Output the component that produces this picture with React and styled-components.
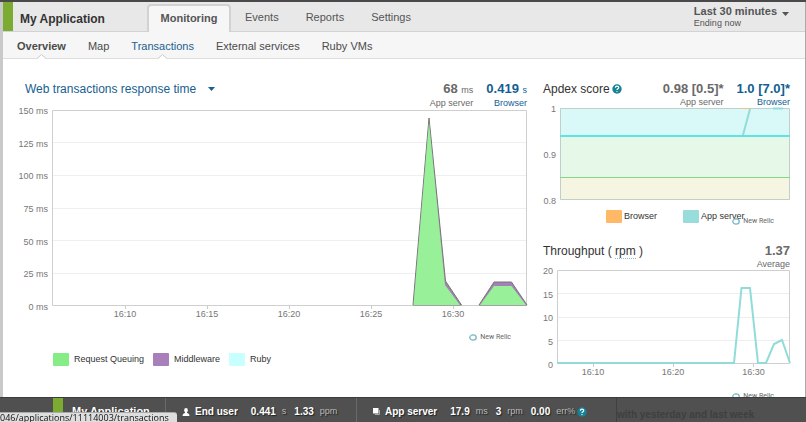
import React from "react";
import styled, { createGlobalStyle } from "styled-components";

const sans = `"Liberation Sans", Arial, Helvetica, sans-serif`;

const GlobalStyle = createGlobalStyle`
  *, *::before, *::after { box-sizing: border-box; }
  body { margin: 0; background: #fff; font-family: ${sans}; color: #555; }
  h1, h2, ul, dl, dd { margin: 0; padding: 0; }
  a { color: inherit; text-decoration: none; }
  button { border: 0; padding: 0; background: none; font-family: inherit; color: inherit; cursor: pointer; }
`;

const Page = styled.div`
  height: 100vh;
  overflow: hidden;
  display: flex;
  flex-direction: column;
  border-top: 2px solid #4b484b;
`;

const Frame = styled.div`
  flex: 1;
  min-height: 0;
  overflow: hidden;
  border-left: 3px solid #c9c9c9;
  border-right: 1px solid #a9a9a9;
`;

const Header = styled.header`
  display: flex;
  height: 30px;
  background: #e8e8e8;
  border-bottom: 1px solid #d2d2d2;
`;

const AppName = styled.h1`
  width: 144px;
  border-left: 10px solid #7bac31;
  padding: 7px 0 0 7px;
  font: bold 12px/20px ${sans};
  color: #333;
  white-space: nowrap;
`;

const Tabs = styled.nav`
  display: flex;
  flex: 1;
  gap: 27px;
  font-size: 11px;
  line-height: 26px;
  padding-top: 2px;
`;

const Tab = styled.a`
  ${(p) =>
    p.$active &&
    `
    margin-right: -13px;
    width: 84px;
    height: 28px;
    text-align: center;
    font-weight: bold;
    background: #f6f6f6;
    border: 2px solid #d2d2d2;
    border-bottom: 0;
    border-radius: 4px 4px 0 0;
    line-height: 24px;
  `}
`;

const TimePicker = styled.button`
  display: flex;
  align-items: flex-start;
  gap: 5px;
  margin: 3px 16px 0 0;
  text-align: left;
  font-size: 11px;
  line-height: 12px;
  svg { margin-top: 7px; }
`;

const TimeRange = styled.span`
  font-weight: bold;
`;

const TimeEnd = styled.span`
  display: block;
  font: 9px/12px ${sans};
`;

const SubNav = styled.nav`
  display: flex;
  gap: 22px;
  height: 27px;
  padding-left: 14px;
  background: #f6f6f6;
  border-bottom: 1px solid #dedede;
  font-size: 11px;
  line-height: 29px;
`;

const SubLink = styled.a`
  display: flex;
  flex-direction: column;
  align-items: center;
  height: 27px;
  font-weight: ${(p) => (p.$bold ? "bold" : "normal")};
  color: ${(p) => (p.$blue ? "#1d608f" : "#4b4b4b")};
  svg { margin-top: -7px; flex: none; }
`;

const Columns = styled.main`
  display: grid;
  grid-template-columns: minmax(0, 509fr) minmax(0, 247fr);
  gap: 16px;
  padding: 22px 15px 0;
`;

const Panel = styled.section`
  display: flex;
  flex-direction: column;
`;

const PanelHead = styled.div`
  display: flex;
  justify-content: space-between;
  align-items: flex-start;
  height: ${(p) => p.$h}px;
  padding-left: ${(p) => p.$inset || 0}px;
`;

const Title = styled.h2`
  display: flex;
  align-items: center;
  gap: 2px;
  font-weight: normal;
  font-size: 12px;
  line-height: 16px;
  color: #333;
  white-space: nowrap;
`;

const TitleButton = styled.button`
  display: flex;
  align-items: center;
  gap: 12px;
  font-size: 12px;
  line-height: 16px;
  color: #17608f;
`;

const Unit = styled.abbr`
  text-decoration: none;
  border-bottom: 1px dotted #7cc6cf;
`;

const Stats = styled.dl`
  display: flex;
  gap: 13px;
  text-align: right;
  white-space: nowrap;
`;

const Stat = styled.div`
  display: flex;
  flex-direction: column-reverse;
  color: ${(p) => (p.$blue ? "#135e92" : "#696969")};
  dt { font-size: 9px; line-height: 10px; }
  dd { font-size: 13px; line-height: 16px; font-weight: bold; }
  small { font-size: 9px; font-weight: normal; }
`;

const ChartGrid = styled.div`
  display: grid;
  grid-template-columns: ${(p) => p.$axis}px minmax(0, 1fr);
`;

const YAxis = styled.div`
  display: flex;
  flex-direction: column;
  justify-content: space-between;
  margin: -5px 0 -7px;
  padding-right: 4px;
  text-align: right;
  font-size: 9px;
  line-height: 12px;
  color: #777;
  white-space: nowrap;
`;

const Plot = styled.svg`
  display: block;
  width: 100%;
  height: ${(p) => p.$h}px;
  overflow: visible;
  * { vector-effect: non-scaling-stroke; }
`;

const XAxis = styled.div`
  grid-column: 2;
  display: grid;
  grid-template-columns: ${(p) => p.$cols};
  font-size: 9px;
  line-height: 11px;
  color: #777;
`;

const Tick = styled.span`
  display: flex;
  flex-direction: column;
  align-items: center;
  &::before { content: ""; height: 3px; border-left: 1px solid #ccc; }
`;

const Brand = styled.div`
  display: flex;
  align-items: center;
  align-self: flex-end;
  gap: 3px;
  height: 8px;
  margin: ${(p) => p.$top}px 16px 0 0;
  font: 7px/8px Roboto, sans-serif;
  color: #666;
`;

const Legend = styled.ul`
  display: flex;
  list-style: none;
  gap: ${(p) => p.$gap}px;
  margin-top: ${(p) => p.$top || 0}px;
  padding-left: ${(p) => p.$inset}px;
  font-size: 9px;
  line-height: 13px;
  color: #333;
`;

const LegendItem = styled.li`
  display: flex;
  gap: ${(p) => p.$gap}px;
  white-space: nowrap;
  &::before {
    content: "";
    width: 16px;
    height: 13px;
    border-radius: 1px;
    background: ${(p) => p.$color};
  }
`;

const RightColumn = styled.div`
  display: flex;
  flex-direction: column;
`;

const ApdexLegend = styled.div`
  display: flex;
  flex-direction: column;
  height: 43px;
  padding-top: 10px;
`;

const StatusBar = styled.footer`
  display: flex;
  flex: none;
  height: 25px;
  padding-left: 53px;
  background: #505050;
  border-top: 1px solid #3c3c3c;
  color: #fff;
  font-size: 10px;
  line-height: 27px;
  text-shadow: 1px 1px 1px #222;
  white-space: nowrap;
  overflow: hidden;
`;

const BarName = styled.strong`
  width: 113px;
  padding-left: 9px;
  border-left: 10px solid #7bac31;
  border-right: 1px solid #696969;
  font-size: 11px;
`;

const BarGroup = styled.div`
  display: flex;
  align-items: center;
  width: ${(p) => p.$w}px;
  height: 27px;
  padding-left: 16px;
  border-right: 1px solid ${(p) => (p.$last ? "#404040" : "#696969")};
`;

const BarLabel = styled.strong`
  display: flex;
  align-items: center;
  gap: 5px;
  margin-right: 13px;
`;

const Metric = styled.span`
  display: flex;
  gap: 6px;
  margin-right: 8px;
  font-weight: bold;
  &:last-of-type { margin-right: 2px; }
  small { font-size: 9px; font-weight: normal; color: #bbb; }
`;

const FadedNote = styled.span`
  padding-top: 7px;
  font-size: 10px;
  line-height: 20px;
  font-weight: bold;
  text-shadow: none;
  color: #3f3f3f;
`;

const LinkPreview = styled.div`
  position: fixed;
  left: 0;
  bottom: 0;
  height: 10px;
  padding-right: 8px;
  background: #dedede;
  border-top: 1px solid #aaa;
  border-radius: 0 3px 0 0;
  font: 9px/10px "Open Sans", "Noto Sans", sans-serif;
  color: #111;
`;

const Caret = ({ color = "#555" }) => (
  <svg width="7" height="4" viewBox="0 0 7 4" aria-hidden="true">
    <path d="M0 0h7L3.5 4z" fill={color} />
  </svg>
);

const Notch = () => (
  <svg width="9" height="5" viewBox="0 0 9 5" aria-hidden="true">
    <path d="M0 4.5L4.5 0.5L9 4.5V5H0z" fill="#fff" />
    <path d="M0 4.5L4.5 0.5L9 4.5" fill="none" stroke="#c8c8c8" />
  </svg>
);

const Help = () => (
  <svg width="10" height="10" viewBox="0 0 10 10" role="img" aria-label="Help">
    <circle cx="5" cy="5" r="4.7" fill="#168297" />
    <path d="M3.4 3.8C3.4 1.7 6.7 1.7 6.7 3.7C6.7 4.8 5 4.8 5 6" fill="none" stroke="#fff" strokeWidth="1.2" />
    <circle cx="5" cy="7.6" r="0.7" fill="#fff" />
  </svg>
);

const NewRelic = ({ top }) => (
  <Brand $top={top}>
    <svg width="8" height="7" viewBox="0 0 8 7" aria-hidden="true">
      <ellipse cx="4" cy="3.5" rx="3.2" ry="2.6" fill="#fff" stroke="#76b6c5" strokeWidth="1.3" />
      <path d="M1 2.6C2 1 5 0.6 6.4 2" fill="none" stroke="#9fced8" />
    </svg>
    New Relic
  </Brand>
);

const Person = () => (
  <svg width="8" height="8" viewBox="0 0 8 8" aria-hidden="true">
    <ellipse cx="4" cy="2.3" rx="1.8" ry="2.2" fill="#fff" />
    <path d="M0.5 8C0.5 5.8 2 5.3 3 5V4h2v1c1 .3 2.500 .8 2.500 3z" fill="#fff" />
  </svg>
);

const Server = () => (
  <svg width="7" height="7" viewBox="0 0 7 7" aria-hidden="true">
    <path d="M2 6.500H6.500V2" fill="none" stroke="#aaa" />
    <path d="M0 0h5.500v5.500H0z" fill="#fff" />
  </svg>
);

const Labels = ({ values }) => (
  <YAxis>
    {values.map((v) => (
      <span key={v}>{v}</span>
    ))}
  </YAxis>
);

const Times = ({ cols, lead, values }) => (
  <XAxis $cols={cols}>
    {lead && <span />}
    {values.map((v) => (
      <Tick key={v}>{v}</Tick>
    ))}
  </XAxis>
);

const ResponseTime = () => (
  <Panel>
    <PanelHead $h={29} $inset={7}>
      <Title>
        <TitleButton>
          Web transactions response time <Caret color="#17608f" />
        </TitleButton>
      </Title>
      <Stats>
        <Stat>
          <dt>App server</dt>
          <dd>68 <small>ms</small></dd>
        </Stat>
        <Stat $blue>
          <dt>Browser</dt>
          <dd>0.419 <small>s</small></dd>
        </Stat>
      </Stats>
    </PanelHead>
    <ChartGrid $axis={34}>
      <Labels values={["150 ms", "125 ms", "100 ms", "75 ms", "50 ms", "25 ms", "0 ms"]} />
      <Plot $h={196} viewBox="0 0 475 196" preserveAspectRatio="none">
        <path d="M0 32.500H475M0 65.500H475M0 98.500H475M0 130.500H475M0 163.500H475" stroke="#efefef" />
        <path d="M.5 195.500V.5H474.500V195.500z" fill="none" stroke="#cfcfcf" />
        <path d="M361 195L377 8L393.500 171L409.500 195zM427 195L442 172H459.500L475 195z" fill="#a67fb6" stroke="#777" />
        <path d="M361.500 195L377 12L393 175L408 195zM428 195L442 176H459.500L474 195z" fill="#98f098" />
      </Plot>
      <Times cols="32fr repeat(5, 82fr) 33fr" lead values={["16:10", "16:15", "16:20", "16:25", "16:30"]} />
    </ChartGrid>
    <NewRelic top={13} />
    <Legend $gap={9} $inset={35} $top={12}>
      <LegendItem $gap={5} $color="#86ed86">Request Queuing</LegendItem>
      <LegendItem $gap={5} $color="#a87fba">Middleware</LegendItem>
      <LegendItem $gap={5} $color="#c8ffff">Ruby</LegendItem>
    </Legend>
  </Panel>
);

const Apdex = () => (
  <Panel>
    <PanelHead $h={27}>
      <Title>Apdex score <Help /></Title>
      <Stats>
        <Stat>
          <dt>App server</dt>
          <dd>0.98 [0.5]*</dd>
        </Stat>
        <Stat $blue>
          <dt>Browser</dt>
          <dd>1.0 [7.0]*</dd>
        </Stat>
      </Stats>
    </PanelHead>
    <ChartGrid $axis={17}>
      <Labels values={["1", "0.9", "0.8"]} />
      <Plot $h={92} viewBox="0 0 230 92" preserveAspectRatio="none">
        <path d="M0 0H230V28H0z" fill="#d9f9f8" />
        <path d="M0 28H230V69H0z" fill="#e6f8e8" />
        <path d="M0 69H230V92H0z" fill="#f5f5e2" />
        <path d="M.5 .5H229.500V91.500H.5z" fill="none" stroke="#bfcfcb" />
        <path d="M0 69.500H230" stroke="#82d884" />
        <path d="M0 28H230" stroke="#60e3e3" strokeWidth="2" />
        <path d="M182 .5H190" stroke="#f5c07b" />
        <path d="M183 27L190 1M213 .5H223" fill="none" stroke="#91dcd9" strokeWidth="2" />
      </Plot>
    </ChartGrid>
    <ApdexLegend>
      <Legend $gap={26} $inset={63}>
        <LegendItem $gap={2} $color="#ffb866">Browser</LegendItem>
        <LegendItem $gap={2} $color="#98dddb">App server</LegendItem>
      </Legend>
      <NewRelic top={-6} />
    </ApdexLegend>
  </Panel>
);

const Throughput = () => (
  <Panel>
    <PanelHead $h={27}>
      <Title>
        <span>Throughput ( <Unit>rpm</Unit> )</span>
      </Title>
      <Stats>
        <Stat>
          <dt>Average</dt>
          <dd>1.37</dd>
        </Stat>
      </Stats>
    </PanelHead>
    <ChartGrid $axis={14}>
      <Labels values={["20", "15", "10", "5", "0"]} />
      <Plot $h={94} viewBox="0 0 233 94" preserveAspectRatio="none">
        <path d="M0 23.500H233M0 47.500H233M0 70.500H233" stroke="#eee" />
        <path d="M.5 93.500V.5H232.500V93.500z" fill="none" stroke="#cfcfcf" />
        <path
          d="M0 93H177L184.500 18H193L201 93H209L217 74L225 70L233 93"
          fill="none"
          stroke="#91dcd9"
          strokeWidth="2"
        />
      </Plot>
      <Times cols="72fr 88fr 73fr" values={["16:10", "16:20", "16:30"]} />
    </ChartGrid>
    <NewRelic top={14} />
  </Panel>
);

export default function App() {
  return (
    <Page>
      <GlobalStyle />
      <Frame>
        <Header>
          <AppName>My Application</AppName>
          <Tabs aria-label="Product">
            <Tab href="#monitoring" $active>Monitoring</Tab>
            <Tab href="#events">Events</Tab>
            <Tab href="#reports">Reports</Tab>
            <Tab href="#settings">Settings</Tab>
          </Tabs>
          <TimePicker>
            <span>
              <TimeRange>Last 30 minutes</TimeRange>
              <TimeEnd>Ending now</TimeEnd>
            </span>
            <Caret />
          </TimePicker>
        </Header>
        <SubNav aria-label="Monitoring">
          <SubLink href="#overview" $bold>Overview<Notch /></SubLink>
          <SubLink href="#map">Map</SubLink>
          <SubLink href="#transactions" $blue>Transactions<Notch /></SubLink>
          <SubLink href="#external">External services</SubLink>
          <SubLink href="#vms">Ruby VMs</SubLink>
        </SubNav>
        <Columns>
          <ResponseTime />
          <RightColumn>
            <Apdex />
            <Throughput />
          </RightColumn>
        </Columns>
      </Frame>
      <StatusBar>
        <BarName>My Application</BarName>
        <BarGroup $w={191}>
          <BarLabel><Person />End user</BarLabel>
          <Metric>0.441 <small>s</small></Metric>
          <Metric>1.33 <small>ppm</small></Metric>
        </BarGroup>
        <BarGroup $w={260} $last>
          <BarLabel><Server />App server</BarLabel>
          <Metric>17.9 <small>ms</small></Metric>
          <Metric>3 <small>rpm</small></Metric>
          <Metric>0.00 <small>err%</small></Metric>
          <Help />
        </BarGroup>
        <FadedNote>with yesterday and last week</FadedNote>
      </StatusBar>
      <LinkPreview>046/applications/11114003/transactions</LinkPreview>
    </Page>
  );
}
